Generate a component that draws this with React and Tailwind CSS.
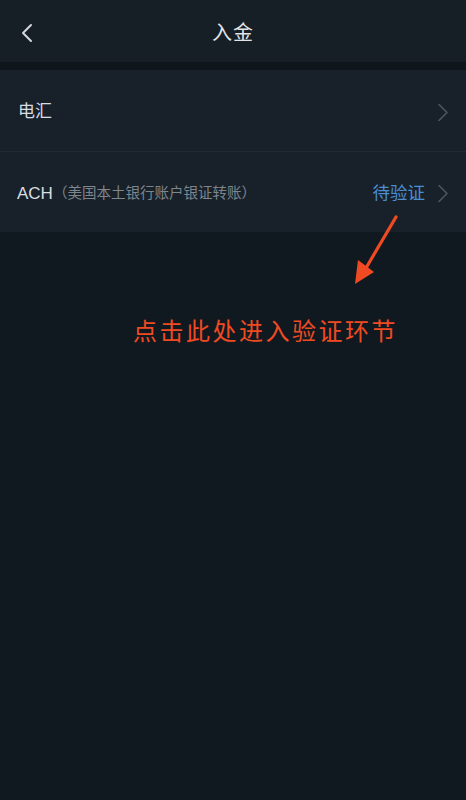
import React from "react";

const font = { fontFamily: '"Liberation Sans", "Noto Sans CJK SC", sans-serif' };

function Chevron({ className }) {
  return (
    <svg width="12" height="19" viewBox="0 0 12 19" className={className} fill="none">
      <path d="M2 1.5 L10 9.5 L2 17.5" stroke="currentColor" strokeWidth="1.6" strokeLinecap="round" strokeLinejoin="round" />
    </svg>
  );
}

export default function App() {
  return (
    <div className="relative w-[466px] h-[800px] bg-[#111920] overflow-hidden" style={font}>
      {/* Header */}
      <div className="relative h-[62px] bg-[#161e26] flex items-center justify-center pt-[4px]">
        <svg width="14" height="20" viewBox="0 0 14 20" className="absolute left-[20px] top-[23px] text-[#d4d8dc]" fill="none">
          <path d="M11 2 L3 10 L11 18" stroke="currentColor" strokeWidth="2" strokeLinecap="round" strokeLinejoin="round" />
        </svg>
        <span className="text-[20px] text-[#e2e5e8] tracking-[1px]">入金</span>
      </div>
      <div className="h-[8px] bg-[#0e151b]" />
      {/* Rows */}
      <div className="bg-[#18212a]">
        <div className="h-[81px] flex items-center justify-between pl-[18px] pr-[17px] pt-[3px]">
          <span className="text-[17px] text-[#d9dde1]">电汇</span>
          <Chevron className="text-[#4e565e]" />
        </div>
        <div className="h-px bg-[#212a33]" />
        <div className="h-[80px] flex items-center justify-between pl-[17px] pr-[17px] pt-[3px]">
          <div className="flex items-center">
            <span className="text-[17px] text-[#d9dde1]">ACH</span>
            <span className="text-[14.5px] text-[#7d858d]">（美国本土银行账户银证转账）</span>
          </div>
          <div className="flex items-center gap-[12px]">
            <span className="text-[17.5px] text-[#4b8ed3]">待验证</span>
            <Chevron className="text-[#4e565e]" />
          </div>
        </div>
      </div>
      {/* Annotation */}
      <svg width="60" height="80" viewBox="0 0 60 80" className="absolute left-[350px] top-[212px]" fill="none">
        <path d="M46 5 L16 56" stroke="#f04a22" strokeWidth="3.2" strokeLinecap="round" />
        <path d="M5 72 L8 48 L24 60 Z" fill="#f04a22" />
      </svg>
      <div className="absolute left-[133px] top-[314px] text-[24px] leading-[36px] tracking-[2.5px] text-[#f04a22]">
        点击此处进入验证环节
      </div>
    </div>
  );
}
